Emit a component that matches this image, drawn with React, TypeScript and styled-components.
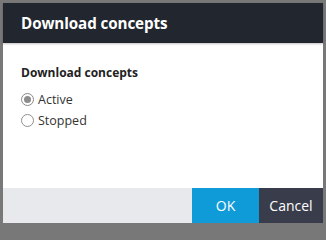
import React, { useState } from "react";
import styled, { createGlobalStyle } from "styled-components";

const GlobalStyle = createGlobalStyle`
  html, body {
    margin: 0;
    padding: 0;
    background: #787878;
  }
  body {
    padding: 3px;
    font-family: "Open Sans", "Noto Sans", sans-serif;
  }
`;

const Dialog = styled.div`
  width: 320px;
  height: 220px;
  display: flex;
  flex-direction: column;
  background: #ffffff;
`;

const Header = styled.div`
  height: 40px;
  flex-shrink: 0;
  display: flex;
  align-items: center;
  padding-left: 18px;
  background: #22272f;
  box-shadow: 0 1px 2px rgba(0, 0, 0, 0.25);
  color: #ffffff;
  font-size: 15.2px;
  font-weight: 700;
  letter-spacing: -0.1px;
`;

const Body = styled.div`
  flex: 1;
  padding: 21px 18px 0;
`;

const GroupLabel = styled.div`
  font-size: 12px;
  font-weight: 700;
  color: #222222;
  margin-bottom: 8px;
`;

const Option = styled.label`
  display: flex;
  align-items: center;
  height: 21px;
  font-size: 12.5px;
  color: #333333;
  cursor: pointer;
`;

const RadioCircle = styled.span<{ $checked: boolean }>`
  width: 11px;
  height: 11px;
  border-radius: 50%;
  border: 1px solid ${(p) => (p.$checked ? "#8a8a8a" : "#8f8f8f")};
  margin-right: 4px;
  display: flex;
  align-items: center;
  justify-content: center;
  background: #fff;

  &::after {
    content: "";
    width: 7px;
    height: 7px;
    border-radius: 50%;
    background: ${(p) => (p.$checked ? "#8c8c8c" : "transparent")};
  }
`;

const Footer = styled.div`
  height: 35px;
  flex-shrink: 0;
  display: flex;
  justify-content: flex-end;
  background: #e8e9ed;
`;

const Button = styled.button<{ $primary?: boolean; $width: number }>`
  width: ${(p) => p.$width}px;
  height: 100%;
  border: none;
  margin: 0;
  padding: 0;
  font-family: inherit;
  font-size: 14px;
  color: #ffffff;
  background: ${(p) => (p.$primary ? "#0f9ad8" : "#393c4a")};
  cursor: pointer;
`;

const options = ["Active", "Stopped"];

export default function App() {
  const [value, setValue] = useState("Active");
  return (
    <>
      <GlobalStyle />
      <Dialog>
        <Header>Download concepts</Header>
        <Body>
          <GroupLabel>Download concepts</GroupLabel>
          {options.map((o) => (
            <Option key={o} onClick={() => setValue(o)}>
              <RadioCircle $checked={value === o} />
              {o}
            </Option>
          ))}
        </Body>
        <Footer>
          <Button $primary $width={67}>
            OK
          </Button>
          <Button $width={64}>Cancel</Button>
        </Footer>
      </Dialog>
    </>
  );
}
